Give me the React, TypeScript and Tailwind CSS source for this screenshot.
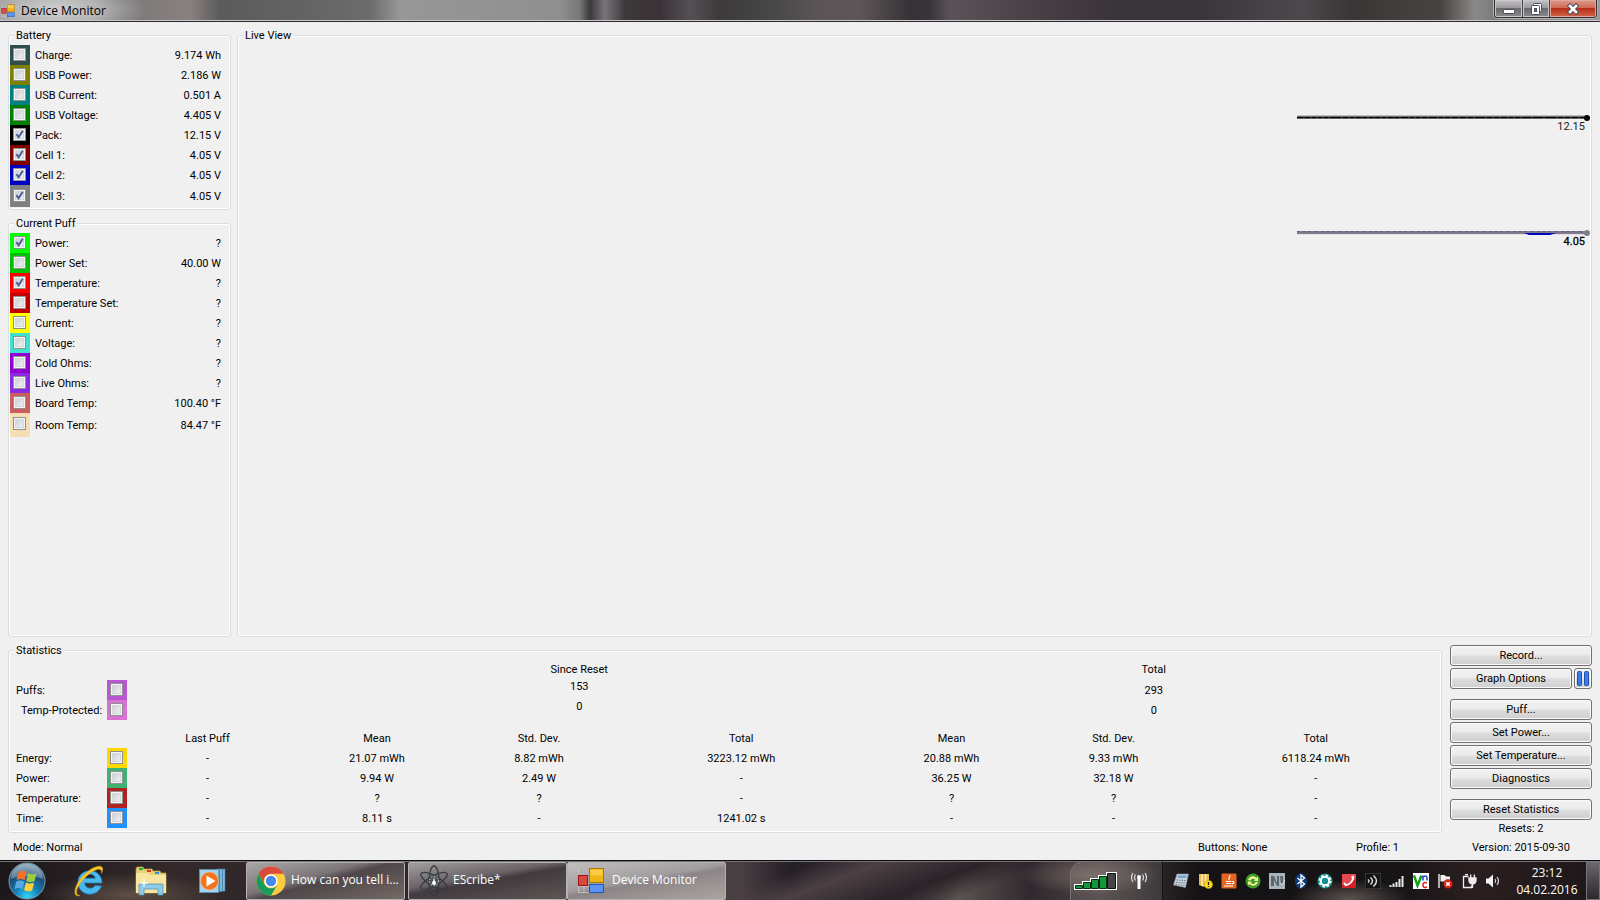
import React, { useState } from 'react';

interface Reading {
  id: string;
  label: string;
  value: string;
  color: string;
  on?: boolean;
}

const battery: Reading[] = [
  { id: 'charge', label: 'Charge:', value: '9.174 Wh', color: 'bg-[#2f4f4f]' },
  { id: 'usb-power', label: 'USB Power:', value: '2.186 W', color: 'bg-[#808000]' },
  { id: 'usb-current', label: 'USB Current:', value: '0.501 A', color: 'bg-[#008080]' },
  { id: 'usb-voltage', label: 'USB Voltage:', value: '4.405 V', color: 'bg-[#008000]' },
  { id: 'pack', label: 'Pack:', value: '12.15 V', color: 'bg-black', on: true },
  { id: 'cell-1', label: 'Cell 1:', value: '4.05 V', color: 'bg-[#800000]', on: true },
  { id: 'cell-2', label: 'Cell 2:', value: '4.05 V', color: 'bg-[#0000c0]', on: true },
  { id: 'cell-3', label: 'Cell 3:', value: '4.05 V', color: 'bg-[#808080]', on: true },
];

const currentPuff: Reading[] = [
  { id: 'power', label: 'Power:', value: '?', color: 'bg-[#00ff00]', on: true },
  { id: 'power-set', label: 'Power Set:', value: '40.00 W', color: 'bg-[#00c000]' },
  { id: 'temperature', label: 'Temperature:', value: '?', color: 'bg-[#ff0000]', on: true },
  { id: 'temperature-set', label: 'Temperature Set:', value: '?', color: 'bg-[#c00000]' },
  { id: 'current', label: 'Current:', value: '?', color: 'bg-[#ffff00]' },
  { id: 'voltage', label: 'Voltage:', value: '?', color: 'bg-[#40e0d0]' },
  { id: 'cold-ohms', label: 'Cold Ohms:', value: '?', color: 'bg-[#9400d3]' },
  { id: 'live-ohms', label: 'Live Ohms:', value: '?', color: 'bg-[#8a2be2]' },
  { id: 'board-temp', label: 'Board Temp:', value: '100.40 °F', color: 'bg-[#cd5c5c]' },
  { id: 'room-temp', label: 'Room Temp:', value: '84.47 °F', color: 'bg-[#f5deb3]' },
];

const statRows = [
  { id: 'stat-energy', label: 'Energy:', color: 'bg-[#ffd700]', cells: ['-', '21.07 mWh', '8.82 mWh', '3223.12 mWh', '20.88 mWh', '9.33 mWh', '6118.24 mWh'] },
  { id: 'stat-power', label: 'Power:', color: 'bg-[#3cb371]', cells: ['-', '9.94 W', '2.49 W', '-', '36.25 W', '32.18 W', '-'] },
  { id: 'stat-temperature', label: 'Temperature:', color: 'bg-[#b22222]', cells: ['-', '?', '?', '-', '?', '?', '-'] },
  { id: 'stat-time', label: 'Time:', color: 'bg-[#1e90ff]', cells: ['-', '8.11 s', '-', '1241.02 s', '-', '-', '-'] },
];

const CheckCell: React.FC<{ id: string; color: string; on?: boolean; className?: string }> = ({
  id,
  color,
  on = false,
  className = 'h-5 pt-[3px]',
}) => {
  const [checked, setChecked] = useState(on);
  return (
    <span className={`flex w-5 shrink-0 items-start pl-[3px] ${color} ${className}`}>
      <span className="relative block h-[13px] w-[13px]">
        <input
          id={id}
          type="checkbox"
          checked={checked}
          onChange={(e) => setChecked(e.target.checked)}
          className="block h-[13px] w-[13px] appearance-none border border-[#8e8f8f] bg-linear-to-br from-[#c3c8cf] to-[#f8f8f8] shadow-[inset_0_0_0_1px_#f4f4f4,inset_0_0_0_2px_#d4d6d9]"
        />
        {checked && (
          <svg className="pointer-events-none absolute inset-0" width="13" height="13" viewBox="0 0 13 13">
            <path d="M3.4 6.2 5.6 9.3 9.8 2.8" fill="none" stroke="#4a5f97" strokeWidth="2" />
          </svg>
        )}
      </span>
    </span>
  );
};

const Group: React.FC<{ title: string; className?: string; children: React.ReactNode }> = ({
  title,
  className = '',
  children,
}) => (
  <fieldset className={`min-w-0 rounded-[3px] border border-[#d5dfe5] shadow-[inset_0_0_0_1px_#fff] ${className}`}>
    <legend className="ml-[5px] bg-[#f0f0f0] px-[2px] leading-[15px]">{title}</legend>
    {children}
  </fieldset>
);

const ReadingList: React.FC<{ rows: Reading[]; lastRow: string }> = ({ rows, lastRow }) => (
  <ul className="pt-[2px] pr-[9px] pl-px">
    {rows.map((row, i) => {
      const size = i === rows.length - 1 ? lastRow : 'h-5 pt-[3px]';
      return (
        <li key={row.id} className="flex items-center">
          <CheckCell id={row.id} color={row.color} on={row.on} className={size} />
          <label htmlFor={row.id} className="ml-[5px]">
            {row.label}
          </label>
          <span className="ml-auto">{row.value}</span>
        </li>
      );
    })}
  </ul>
);

const packTicks = [7, 14, 20, 26, 32, 45, 52, 58, 65, 71, 77, 84, 90, 97, 103, 112, 118, 124, 131, 141, 147, 154, 162, 170, 177, 189, 196, 203, 211, 217, 224, 235, 247, 260, 267, 274, 282];

const LivePlot = () => (
  <svg className="ml-auto block" width="300" height="300" viewBox="0 0 300 300" role="img" aria-label="Live View">
    <path d="M6 74.5H296" stroke="#000" strokeWidth="2" />
    <path d="M6 73H296M6 75.5H296" stroke="#555" strokeWidth="0.6" />
    {packTicks.map((x) => (
      <path key={x} d={`M${x + 6} 73.5v2`} stroke="#777" strokeWidth="0.8" />
    ))}
    <circle cx="296" cy="75" r="3" fill="#000" />
    <text x="294" y="87" textAnchor="end" fontSize="11" fill="#222">12.15</text>
    <path d="M6 189.5H296" stroke="#7c7884" strokeWidth="3" />
    <path d="M6 188.5H296" stroke="#5d4b85" strokeWidth="0.7" strokeDasharray="2 4" />
    <path d="M6 190.7H296" stroke="#8d7aa8" strokeWidth="0.7" />
    <path d="M233 190l5 2h21l6-2z" fill="#0000c0" />
    <circle cx="296" cy="190" r="3" fill="#808080" />
    <text x="294" y="202" textAnchor="end" fontSize="11" fill="#000" stroke="#000" strokeWidth="0.3">4.05</text>
  </svg>
);

const Statistics = () => (
  <table className="w-full table-fixed border-collapse text-center whitespace-nowrap">
    <colgroup>
      <col className="w-[98px]" />
      <col className="w-5" />
      <col className="w-[165px]" />
      <col className="w-[170px]" />
      <col className="w-[154px]" />
      <col />
      <col className="w-[170px]" />
      <col className="w-[154px]" />
      <col />
    </colgroup>
    <tbody>
      <tr className="h-[22px]">
        <td colSpan={3} />
        <th colSpan={3} className="p-0 font-normal">Since Reset</th>
        <th colSpan={3} className="p-0 font-normal">Total</th>
      </tr>
      <tr className="h-5">
        <td className="p-0 pl-[7px] text-left"><label htmlFor="stat-puffs">Puffs:</label></td>
        <td className="p-0"><CheckCell id="stat-puffs" color="bg-[#ba55d3]" /></td>
        <td />
        <td colSpan={3} className="p-0 align-top leading-[14px]">153</td>
        <td colSpan={3} className="p-0">293</td>
      </tr>
      <tr className="h-5">
        <td className="p-0 pl-3 text-left"><label htmlFor="stat-protected">Temp-Protected:</label></td>
        <td className="p-0"><CheckCell id="stat-protected" color="bg-[#da70d6]" /></td>
        <td />
        <td colSpan={3} className="p-0 align-top leading-[14px]">0</td>
        <td colSpan={3} className="p-0">0</td>
      </tr>
      <tr className="h-7">
        <td colSpan={2} />
        {['Last Puff', 'Mean', 'Std. Dev.', 'Total', 'Mean', 'Std. Dev.', 'Total'].map((h, i) => (
          <th key={i} className={`p-0 pt-2 font-normal ${i === 0 ? 'pr-1' : ''}`}>{h}</th>
        ))}
      </tr>
      {statRows.map((row) => (
        <tr key={row.id} className="h-5">
          <td className="p-0 pl-[7px] text-left"><label htmlFor={row.id}>{row.label}</label></td>
          <td className="p-0"><CheckCell id={row.id} color={row.color} /></td>
          {row.cells.map((cell, i) => (
            <td key={i} className={`p-0 ${i === 0 ? 'pr-1' : ''}`}>{cell}</td>
          ))}
        </tr>
      ))}
    </tbody>
  </table>
);

const PushButton: React.FC<{ children: React.ReactNode; className?: string; label?: string }> = ({
  children,
  className = '',
  label,
}) => (
  <button
    type="button"
    aria-label={label}
    className={`flex h-[21px] items-center justify-center rounded-[3px] border border-[#707070] bg-[linear-gradient(#f2f2f2,#ebebeb_48%,#dddddd_52%,#cfcfcf)] leading-[15px] shadow-[inset_0_0_0_1px_#fafafa] ${className}`}
  >
    {children}
  </button>
);

const FormIcon = ({ size }: { size: number }) => (
  <svg width={size} height={size} viewBox="0 0 28 28">
    <path d="M1.5 1v25M1 25.5h12M1.500 19.500h11M7 19v7" stroke="#c8c8c8" fill="none" opacity=".8" />
    <rect x="1.500" y="8.500" width="9" height="10" fill="#d84a3f" stroke="#a01212" />
    <rect x="12.500" y="1.500" width="14" height="14" fill="#f0b414" stroke="#a87800" />
    <rect x="13.500" y="2.500" width="12" height="6" fill="#ffd65a" opacity=".7" />
    <rect x="12.500" y="17.500" width="14" height="8" fill="#5c93f5" stroke="#2456b8" />
  </svg>
);

const TitleBar = () => (
  <header className="flex h-[22px] shrink-0 items-start justify-between border-b border-[#2d2a2f] bg-[radial-gradient(ellipse_90px_30px_at_55px_10px,#d0d0d0,#b4b4b4_50%,transparent),linear-gradient(90deg,#888_0,#777_110px,#8a8080_190px,#5b5b5b_220px,#636363_300px,#6c6c6c_370px,#979797_400px,#8f8f8f_560px,#777_580px,#3d383c_590px,#777579_605px,#3d383b_625px,#3a3236_660px,#555054_690px,#3d3a3b_720px,#474747_770px,#5b5556_820px,#5d5658_860px,#373236_910px,#38343a_930px,#5a5459_950px,#4a4347_1020px,#39333a_1120px,#3a353a_1200px,#4c494d_1300px,#3b3636_1350px,#464442_1440px,#8b8888_1475px,#777_1500px,#999_1600px)] shadow-[inset_0_-1px_0_#c9c5c9]">
    <div className="flex items-center gap-[6px] pl-px">
      <FormIcon size={14} />
      <h1 className="font-['Open_Sans','Noto_Sans',sans-serif] text-[12px] leading-[22px] text-black">Device Monitor</h1>
    </div>
    <div className="mr-[3px] flex h-[18px] w-[103px] overflow-hidden rounded-b-[4px] border border-t-0 border-[#2f2d31] shadow-[0_0_0_1px_#b5b3b6]">
      <button type="button" aria-label="Minimize" className="flex w-7 items-center justify-center border-r border-[#444] bg-[linear-gradient(#c3c1c3,#9d9a9d_45%,#6c696c_50%,#8d8a8e)] shadow-[inset_0_0_0_1px_#c9c7ca]">
        <svg width="12" height="14" viewBox="0 0 12 14"><rect x=".5" y="7.500" width="11" height="4" rx="1" fill="#fff" stroke="#4a4a5c" /></svg>
      </button>
      <button type="button" aria-label="Restore" className="flex w-[27px] items-center justify-center border-r border-[#444] bg-[linear-gradient(#c3c1c3,#9d9a9d_45%,#6c696c_50%,#8d8a8e)] shadow-[inset_0_0_0_1px_#c9c7ca]">
        <svg width="13" height="14" viewBox="0 0 13 14" fill="#fff" stroke="#4a4a5c">
          <rect x="3.500" y="1.500" width="8" height="8" rx="1" />
          <rect x="1.500" y="3.500" width="8" height="9" rx="1" />
          <rect x="4.500" y="6.500" width="2" height="3" fill="#777" />
        </svg>
      </button>
      <button type="button" aria-label="Close" className="flex flex-1 items-center justify-center bg-[linear-gradient(#dc9b8c,#cf6a55_45%,#b82f18_50%,#d2654a)] shadow-[inset_0_0_0_1px_#e0a89c]">
        <svg width="12" height="12" viewBox="0 0 12 12">
          <path d="M3 3l6 6M9 3l-6 6" stroke="#4a4a5c" strokeWidth="4.500" strokeLinecap="square" />
          <path d="M3 3l6 6M9 3l-6 6" stroke="#fff" strokeWidth="2.600" strokeLinecap="square" />
        </svg>
      </button>
    </div>
  </header>
);

const StartOrb = () => (
  <svg width="38" height="38" viewBox="0 0 38 38">
    <defs>
      <radialGradient id="orb" cx=".5" cy=".95" r=".95">
        <stop offset="0" stopColor="#35d6f8" />
        <stop offset=".35" stopColor="#1581b8" />
        <stop offset=".7" stopColor="#1c4a72" />
        <stop offset="1" stopColor="#7d9fb4" />
      </radialGradient>
    </defs>
    <circle cx="19" cy="19" r="18" fill="url(#orb)" stroke="#7e98a8" />
    <path d="M3 17a16 15 0 0 1 32 0c-8-4-23-4-32 0z" fill="#fff" opacity=".3" />
    <path d="M10.500 10c3-1.800 5.500-1.500 8 .2l-1.800 8c-2.600-1.600-5-1.800-8-.2z" fill="#f2702c" />
    <path d="M20 11c3 1.500 5.500 1.600 8.500.3l-2 8c-3 1.200-5.500 1-8.200-.4z" fill="#9ccc3c" />
    <path d="M8.300 19.500c3-1.500 5.400-1.300 8 .2l-1.900 7.600c-2.500-1.500-5-1.600-7.900-.2z" fill="#5aa9e6" />
    <path d="M17.900 20.400c2.800 1.500 5.400 1.600 8.200.4l-2 7.700c-2.900 1.300-5.400 1-8-.4z" fill="#ffd03a" />
  </svg>
);

const ExplorerE = () => (
  <svg width="34" height="34" viewBox="0 0 34 34">
    <path d="M30 19H12.500c.3 5.800 8.500 7 10.500 2.600l6.600.5C24.500 34.500 6 32 6 18.300 6 3.500 29.500 2 30 19zM12.600 14.300h10.700c-.7-5.500-9.800-5.500-10.700 0z" fill="#49b9f0" stroke="#1e86cf" strokeWidth=".8" />
    <path d="M8 31.500C0 34 2 22 10 13 18 3.500 29-.5 30.500 4c.5 1.500 0 3.500-1 5.500.6-4-1.500-5-5-3.800C15 9 4.500 22 4.500 28c0 2.500 1.500 3.500 3.500 3.500z" fill="#f9c929" stroke="#d79a10" strokeWidth=".5" />
  </svg>
);

const FolderIcon = () => (
  <svg width="33" height="30" viewBox="0 0 33 30">
    <path d="M1 26V3l1-2h6l1 2h8l1 2h7l1 2h5v20H1z" fill="#e9cf78" stroke="#b79b49" strokeWidth=".7" />
    <path d="M4 2h4v2H4z" fill="#1fa83a" /><path d="M12 4h4v2h-4z" fill="#d63b26" /><path d="M20 6h4v2h-4z" fill="#2b8de0" />
    <path d="M1 7h12l2 2h16v18H1z" fill="#f6e6a2" />
    <path d="M4 18h24v11h-5v-6H9v6H4z" fill="#8fcbe8" stroke="#4b91b8" strokeWidth=".7" />
    <path d="M9 12l1 4 4 1-4 1-1 4-1-4-4-1 4-1z" fill="#fff" opacity=".9" />
  </svg>
);

const PlayerIcon = () => (
  <svg width="27" height="26" viewBox="0 0 27 26">
    <path d="M18 1h8v22l-8 1z" fill="#7cbbdc" stroke="#3f7ea5" strokeWidth=".6" />
    <path d="M20.500 1v23M23.500 1v22.500" stroke="#3f7ea5" strokeWidth=".8" />
    <rect x=".5" y="1.500" width="19" height="23" fill="#a4d3ec" stroke="#5797bd" strokeWidth=".7" />
    <circle cx="10.500" cy="13" r="9" fill="#f4731c" stroke="#fbc08a" strokeWidth=".7" />
    <path d="M7.500 7.500v11l9-5.500z" fill="#fff" />
  </svg>
);

const ChromeIcon = () => (
  <svg width="30" height="30" viewBox="0 0 30 30">
    <circle cx="15" cy="15" r="14.500" fill="#fccb3f" />
    <path d="M2.440 7.750A14.500 14.500 0 0 1 27.560 7.750H15A7.250 7.250 0 0 0 8.700 18.600z" fill="#dc4a3d" />
    <path d="M2.440 7.750L8.720 18.630A7.250 7.250 0 0 0 21.280 18.630L15 29.500A14.500 14.500 0 0 1 2.440 7.750z" fill="#179c5b" />
    <circle cx="15" cy="15" r="6.600" fill="#fff" />
    <circle cx="15" cy="15" r="5.200" fill="#4688f1" />
  </svg>
);

const AtomIcon = () => (
  <svg width="32" height="32" viewBox="0 0 32 32">
    <g fill="none" stroke="#353b40" strokeWidth="1.300">
      <ellipse cx="16" cy="16" rx="5" ry="15" />
      <ellipse cx="16" cy="16" rx="5" ry="15" transform="rotate(60 16 16)" />
      <ellipse cx="16" cy="16" rx="5" ry="15" transform="rotate(120 16 16)" />
    </g>
    <circle cx="16" cy="16" r="5.500" fill="#4c5357" />
    <circle cx="16" cy="16" r="4.500" fill="none" stroke="#fff" strokeDasharray="1 2" />
    <path d="M16 11.500l1.200 6.500h-2.400z" fill="#fff" /><circle cx="16" cy="18" r="2" fill="#fff" />
  </svg>
);

const TaskButton: React.FC<{ icon: React.ReactNode; title: string; tone: string }> = ({ icon, title, tone }) => (
  <button
    type="button"
    className={`flex h-[38px] w-[159px] items-center rounded-[2px] border border-[#b5b0b3] pl-[9px] text-left ${tone}`}
  >
    <span className="flex w-[35px] shrink-0 items-center">{icon}</span>
    <span className="truncate pb-[3px]">{title}</span>
  </button>
);

const trayIcons: { name: string; art: React.ReactNode }[] = [
  {
    name: 'Calculator',
    art: (
      <g>
        <path d="M4 1h11.500l-3 13.500L.5 12z" fill="#c8d2dc" stroke="#8b99a8" strokeWidth=".6" />
        <path d="M5 2.500h9l-.7 2.500H4.500z" fill="#6fa3d0" />
        <path d="M3.600 7l9 .5M3 9.300l9 .6M2.400 11.500l9.100.8" stroke="#67788a" strokeDasharray="1.500 1" fill="none" />
      </g>
    ),
  },
  {
    name: 'Device warning',
    art: (
      <g>
        <path d="M2 1h10v10l-5 3-5-2z" fill="#e8b94f" /><path d="M5 1v12M8.500 1v12" stroke="#fff0b8" strokeWidth="1.500" />
        <circle cx="11.500" cy="11.500" r="4" fill="#ffe31a" stroke="#b59a00" strokeWidth=".6" />
        <path d="M11.500 9v3M11.500 13v1" stroke="#222" strokeWidth="1.400" />
      </g>
    ),
  },
  {
    name: 'Java',
    art: (
      <g>
        <rect x=".5" y=".5" width="15" height="15" rx="1" fill="#e4651f" />
        <path d="M8.800 2c1.500 1.800-2.400 2.600-.6 5.200M4.500 8.500h6M5 10.500h5M3 13h9M11 8.500c2.500-.5 2.500 2-.3 2.500" fill="none" stroke="#fff" strokeWidth="1.100" />
      </g>
    ),
  },
  {
    name: 'Sync',
    art: (
      <g>
        <circle cx="8" cy="8" r="7.500" fill="#3f9c28" />
        <path d="M3 7c1-4 6-5 8.500-2L13 3.500V8H9l1.200-1.500C8.500 5 6 5.500 5.500 7.500zM13 9c-1 4-6 5-8.500 2L3 12.500V8.500h4L5.800 10c1.700 1.500 4.200 1 4.700-1z" fill="#f0ef9a" />
      </g>
    ),
  },
  {
    name: 'Network monitor',
    art: (
      <g>
        <rect width="16" height="16" fill="#a9b3bb" />
        <path d="M2 13V3h3l3 7V3h2v10H8L5 7v6zM11 3h3v7l-2 3z" fill="#5b6770" /><path d="M11 10l2 2 3-5" stroke="#e4e9ed" fill="none" />
      </g>
    ),
  },
  {
    name: 'Bluetooth',
    art: (
      <g>
        <ellipse cx="8" cy="8" rx="6" ry="7.800" fill="#0c3a7c" />
        <path d="M4.500 5l7 6L8 14V2l3.500 3-7 6" fill="none" stroke="#fff" strokeWidth="1.300" />
      </g>
    ),
  },
  {
    name: 'Settings',
    art: (
      <g>
        <circle cx="8" cy="8" r="7.600" fill="#198f8f" />
        <circle cx="8" cy="8" r="4.200" fill="none" stroke="#fff" strokeWidth="2" />
        <circle cx="8" cy="8" r="5.700" fill="none" stroke="#fff" strokeWidth="1.600" strokeDasharray="2.200 2.270" />
      </g>
    ),
  },
  {
    name: 'Phone',
    art: (
      <g>
        <rect x="1" y="1" width="14" height="14" rx="1" fill="#d81f26" />
        <path d="M1 1h14v5L1 12z" fill="#f0686b" opacity=".6" />
        <path d="M3.500 11.500c4 1.500 9-3.500 8.500-7" fill="none" stroke="#fff" strokeWidth="1.800" /><path d="M3 10l2.500 2.500M10.500 4.500l2.500-1" stroke="#fff" strokeWidth="2" />
      </g>
    ),
  },
  {
    name: 'Wireless',
    art: (
      <g>
        <rect width="16" height="16" fill="#151515" stroke="#555" />
        <path d="M3 6.500q2 1.500 0 3M5.500 4.500q4 3.500 0 7M8.500 2.500q6 5.500 0 11" fill="none" stroke="#ddd" strokeWidth="1.500" />
      </g>
    ),
  },
  {
    name: 'Signal',
    art: <path d="M1.500 14v-2M4.500 14v-3.500M7.500 14V9M10.500 14V6M13.500 14V3" stroke="#e8e8e8" strokeWidth="2" />,
  },
  {
    name: 'VNC',
    art: (
      <g>
        <rect width="16" height="16" fill="#fff" />
        <path d="M1 2.500l3.500 10 4-10" fill="none" stroke="#12a012" strokeWidth="2.400" />
        <path d="M10 7.500V2.500M10 4q4-2.500 4 1v2.500" fill="none" stroke="#2a48d8" strokeWidth="1.600" />
        <path d="M14 10q-4-1.500-4 2t4 2" fill="none" stroke="#e02222" strokeWidth="1.600" />
      </g>
    ),
  },
  {
    name: 'Action Center',
    art: (
      <g>
        <path d="M2 1v14" stroke="#fff" strokeWidth="1.300" /><path d="M3.500 2h4l1.500 1.500h4V10H8.500L7 8.500H3.500z" fill="#f4f4f4" />
        <circle cx="11" cy="11" r="4.600" fill="#d9271c" stroke="#7a0b06" strokeWidth=".5" />
        <path d="M9.200 9.200l3.600 3.600M12.800 9.200l-3.600 3.600" stroke="#fff" strokeWidth="1.500" />
      </g>
    ),
  },
  {
    name: 'Power',
    art: (
      <g fill="none" stroke="#eee" strokeWidth="1.300">
        <path d="M7.500 3.500H2.500v11h8v-2M4 1.700h3" />
        <path d="M8 5h7v2.500q0 3-3.500 3.500Q8 10.500 8 7.500z" fill="#eee" /><path d="M9.700 5V1.500M13.300 5V1.500M11.500 11v4" />
      </g>
    ),
  },
  {
    name: 'Volume',
    art: (
      <g>
        <path d="M1 5.500h2.500L8 1.500v13L3.500 10.500H1z" fill="#f2f2f2" />
        <path d="M10 6q1.500 2 0 4M12 4q3 4 0 8" fill="none" stroke="#ddd" strokeWidth="1.200" />
      </g>
    ),
  },
];

const Taskbar = () => (
  <footer className="flex h-10 shrink-0 items-stretch border-t border-[#0c0b0d] bg-[radial-gradient(ellipse_90px_22px_at_130px_34px,#5e4f45,transparent),radial-gradient(ellipse_70px_20px_at_1090px_14px,#6c5f5a,transparent),radial-gradient(ellipse_60px_20px_at_1350px_38px,#5b524e,transparent),linear-gradient(160deg,transparent_48%,#4b4044_52%,#2a2328_58%,transparent_62%),linear-gradient(90deg,#1b171b,#33292b_170px,#2c2428_480px,#4a4044_740px,#241f25_790px,#3a3138_900px,#5b5350_960px,#30292f_1030px,#4a4041_1100px,#141214_1200px,#171416_1400px,#2a1f20_1470px,#1e1719)] font-['Open_Sans','Noto_Sans',sans-serif] text-[12px] text-white shadow-[inset_0_1px_0_#77717a]">
    <div className="flex w-[246px] shrink-0 items-center">
      <button type="button" aria-label="Start" className="ml-2"><StartOrb /></button>
      <button type="button" aria-label="Internet Explorer" className="ml-[26px]"><ExplorerE /></button>
      <button type="button" aria-label="Windows Explorer" className="ml-[29px]"><FolderIcon /></button>
      <button type="button" aria-label="Media Player" className="ml-[31px]"><PlayerIcon /></button>
    </div>
    <div className="flex pt-px">
      <TaskButton icon={<ChromeIcon />} title="How can you tell i..." tone="bg-[linear-gradient(165deg,#aaa6a8,#7b7577_40%,#4e4648_50%,#746a66)]" />
      <div className="ml-[3px] flex">
        <TaskButton icon={<AtomIcon />} title="EScribe*" tone="bg-[linear-gradient(170deg,#a19da0,#6b6466_40%,#413a3f_50%,#5f5653)]" />
        <TaskButton icon={<FormIcon size={28} />} title="Device Monitor" tone="bg-[linear-gradient(170deg,#c2bfc0,#a19c9e_45%,#8b8587_52%,#aba5a0)]" />
      </div>
    </div>
    <div className="ml-auto flex">
      <div className="flex w-[93px] items-center rounded-tl-[14px] border-t border-r border-l border-[#77717a] border-r-[#111] bg-white/10 pl-[3px]">
        <svg width="43" height="18" viewBox="0 0 43 18">
          <path d="M1 17v-4h8v-3h8V7h8V4h8V1h9v16z" fill="#fff" stroke="#fff" strokeWidth="2" />
          <path d="M1.500 13.500h7v3h-7zM9.500 10.500h7v6h-7zM17.500 7.500h7v9h-7zM25.500 4.500h7v12h-7z" fill="#16963c" stroke="#062c10" />
          <path d="M33.500 1.500h8v15h-8z" fill="#444" stroke="#111" />
        </svg>
        <svg className="ml-[14px]" width="16" height="18" viewBox="0 0 16 18">
          <path d="M8 6v11" stroke="#fff" strokeWidth="3" /><circle cx="8" cy="5" r="2" fill="#fff" />
          <path d="M4.500 2.500q-2 3 0 6M2 1q-3 4.500 0 9M11.500 2.500q2 3 0 6M14 1q3 4.500 0 9" fill="none" stroke="#ddd" strokeWidth="1.200" />
        </svg>
      </div>
      <div className="flex items-center gap-2 pr-[7px] pl-[10px]">
        {trayIcons.map((icon) => (
          <svg key={icon.name} width="16" height="16" viewBox="0 0 16 16" role="img" aria-label={icon.name}>
            {icon.art}
          </svg>
        ))}
      </div>
      <time className="flex w-[78px] flex-col justify-center text-center leading-[17px]">
        <span>23:12</span>
        <span>04.02.2016</span>
      </time>
      <button type="button" aria-label="Show desktop" className="mt-px w-[14px] border border-[#77717a] bg-linear-to-b from-[#6b666a] to-[#2c282b]" />
    </div>
  </footer>
);

export default function App() {
  return (
    <div className="flex h-screen flex-col overflow-hidden bg-[#f0f0f0] font-['Roboto','Liberation_Sans',sans-serif] text-[11px] leading-[15px] text-black">
      <TitleBar />
      <main className="flex min-h-0 flex-1 flex-col px-2 pt-[6px]">
        <div className="flex min-h-0 flex-1 gap-[6px]">
          <div className="flex w-[223px] shrink-0 flex-col gap-[6px]">
            <Group title="Battery" className="pb-[2px]">
              <ReadingList rows={battery} lastRow="h-[22px] pt-1" />
            </Group>
            <Group title="Current Puff" className="flex-1">
              <ReadingList rows={currentPuff} lastRow="h-6 pt-1" />
            </Group>
          </div>
          <Group title="Live View" className="flex-1">
            <LivePlot />
          </Group>
        </div>
        <div className="mt-[6px] flex items-start gap-2">
          <Group title="Statistics" className="flex-1 pb-1">
            <Statistics />
          </Group>
          <div className="flex w-[142px] shrink-0 flex-col gap-[2px] pt-[2px]">
            <PushButton>Record...</PushButton>
            <div className="mb-2 flex gap-[2px]">
              <PushButton className="flex-1">Graph Options</PushButton>
              <PushButton className="w-[18px]" label="Pause">
                <svg width="14" height="15" viewBox="0 0 14 15">
                  <rect x="1.500" y=".5" width="4" height="14" rx="1" fill="#3d7be8" stroke="#1f4fae" />
                  <rect x="8.500" y=".5" width="4" height="14" rx="1" fill="#3d7be8" stroke="#1f4fae" />
                </svg>
              </PushButton>
            </div>
            <PushButton>Puff...</PushButton>
            <PushButton>Set Power...</PushButton>
            <PushButton>Set Temperature...</PushButton>
            <PushButton className="mb-2">Diagnostics</PushButton>
            <PushButton>Reset Statistics</PushButton>
            <p className="text-center leading-[13px]">Resets: 2</p>
          </div>
        </div>
        <div className="flex h-[25px] items-center pl-[5px]">
          <span>Mode: Normal</span>
          <span className="ml-auto w-[158px]">Buttons: None</span>
          <span className="w-[94px]">Profile: 1</span>
          <span className="w-[142px] text-center">Version: 2015-09-30</span>
        </div>
      </main>
      <Taskbar />
    </div>
  );
}
